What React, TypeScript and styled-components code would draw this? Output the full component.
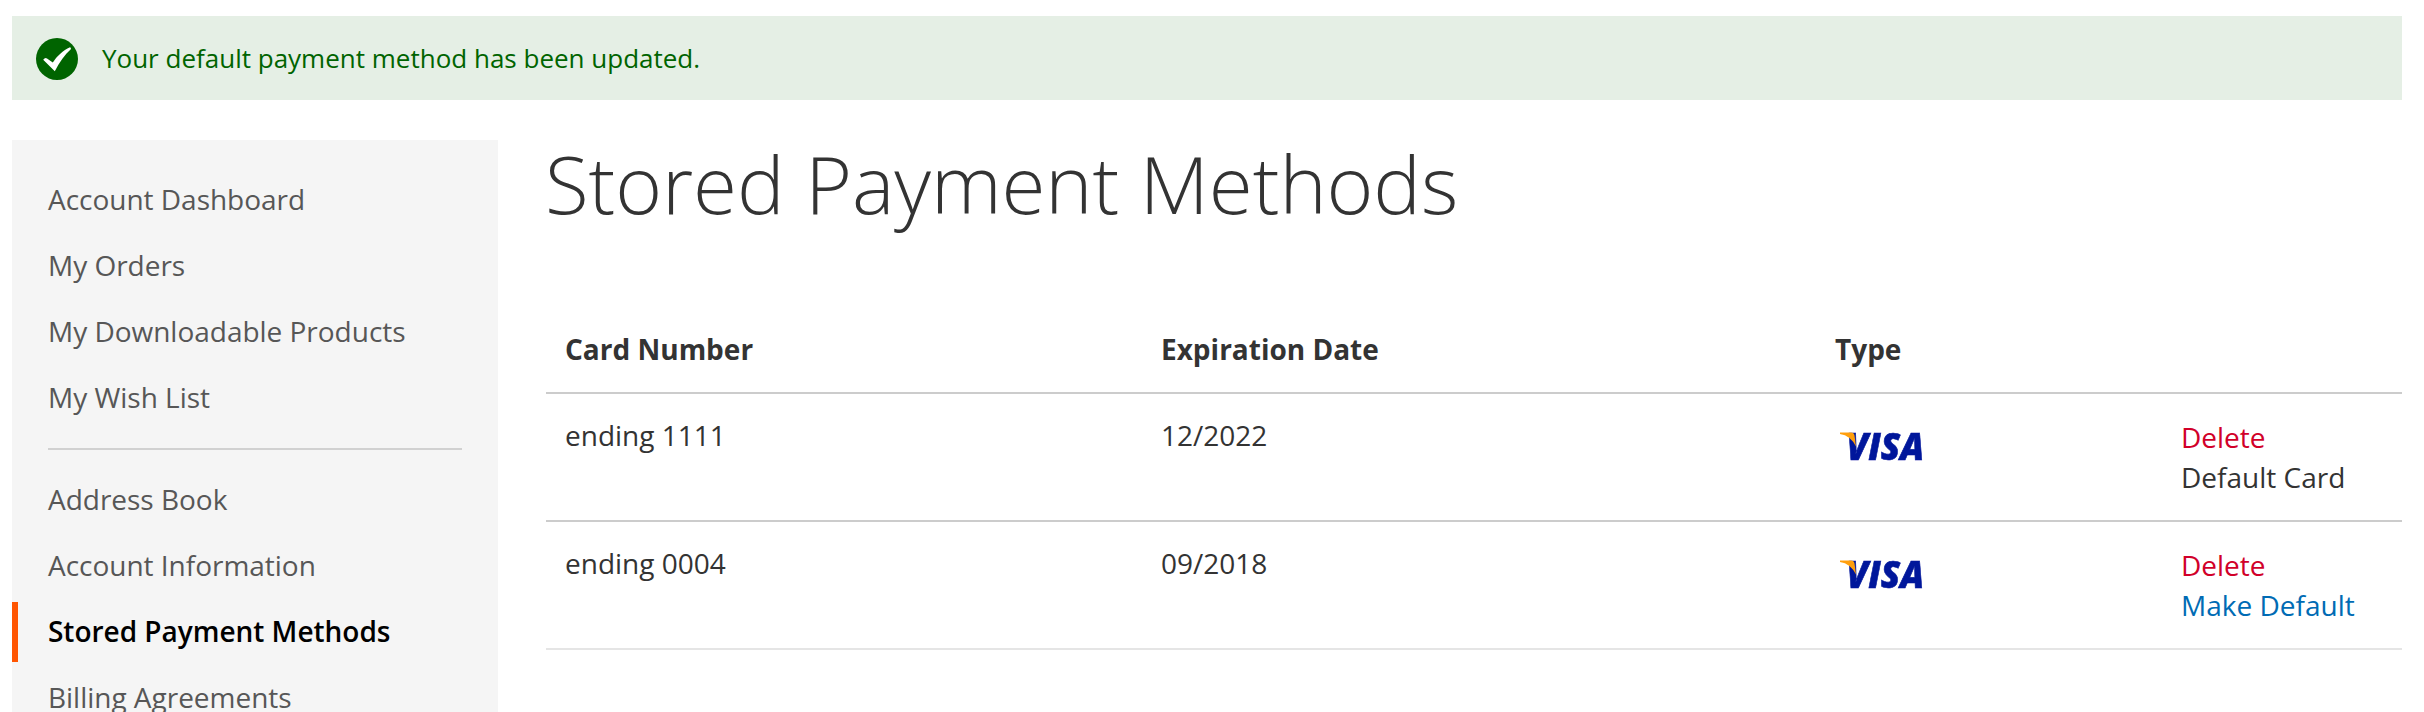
import React from "react";
import styled, { createGlobalStyle } from "styled-components";

const GlobalStyle = createGlobalStyle`
  * { box-sizing: border-box; }
  body {
    margin: 0;
    background: #fff;
    color: #333;
    font-family: "Open Sans", "Noto Sans", sans-serif;
    font-size: 28px;
    line-height: 40px;
  }
`;

const Page = styled.div`
  width: 100%;
  height: 712px;
  padding: 16px 22px 0 12px;
  overflow: hidden;
`;

const Message = styled.div`
  display: flex;
  align-items: center;
  height: 84px;
  padding: 2px 24px 0;
  gap: 24px;
  background: #e5efe5;
  color: #006400;
  font-size: 26px;
  line-height: 36px;
`;

const MessageText = styled.span`
  padding-bottom: 2px;
`;

const Columns = styled.div`
  display: flex;
  align-items: flex-start;
  gap: 48px;
  margin-top: 40px;
`;

const Sidebar = styled.nav`
  flex: 0 0 486px;
  padding: 30px 0;
  background: #f5f5f5;
`;

const NavList = styled.ul`
  display: flex;
  flex-direction: column;
  gap: 6px;
  margin: 0;
  padding: 0;
  list-style: none;
`;

const NavItem = styled.li<{ $current?: boolean }>`
  height: 60px;
  padding: 9px 30px 11px;
  border-left: 6px solid ${(p) => (p.$current ? "#ff5501" : "transparent")};
  color: ${(p) => (p.$current ? "#000" : "#575757")};
  font-weight: ${(p) => (p.$current ? 600 : 400)};
  letter-spacing: -0.02px;
  white-space: nowrap;
`;

const Divider = styled.hr`
  height: 2px;
  margin: 20px 36px;
  border: 0;
  background: #d1d1d1;
`;

const Main = styled.main`
  flex: 1;
  min-width: 0;
`;

const Title = styled.h1`
  margin: -1px 0 81px -1px;
  font-size: 80px;
  font-weight: 300;
  letter-spacing: -0.08px;
  line-height: 88px;
`;

const Row = styled.div<{ $line: string; $head?: boolean }>`
  display: grid;
  grid-template-columns: 596px 674px 346px 1fr;
  height: ${(p) => (p.$head ? "86px" : "128px")};
  padding: 21px 0 0 19px;
  border-bottom: 2px solid ${(p) => p.$line};
  font-weight: ${(p) => (p.$head ? 700 : 400)};
`;

const Actions = styled.div`
  display: flex;
  flex-direction: column;
  padding-top: 2px;
`;

const Action = styled.span<{ $color: string }>`
  color: ${(p) => p.$color};
`;

const SuccessIcon = () => (
  <svg width="42" height="42" viewBox="0 0 42 42">
    <circle cx="21" cy="21" r="21" fill="#006400" />
    <path
      d="M7.200 21.800 Q9 19.300 11 20.400 L16.800 24.600 C21 18 27 12.500 34 9.300 Q35.500 9.800 34.800 11.300 C28.500 17 23.500 24 18.800 33.300 Z"
      fill="#fff"
    />
  </svg>
);

const VisaLogo = () => (
  <svg width="96" height="62" viewBox="0 0 96 62">
    <defs>
      <filter id="soft" x="-10%" y="-10%" width="120%" height="120%">
        <feGaussianBlur stdDeviation="0.7" />
      </filter>
    </defs>
    <g filter="url(#soft)">
      <text
        x="11.500"
        y="44.500"
        fontFamily="Open Sans"
        fontSize="36.500"
        fontWeight="800"
        fontStyle="italic"
        fill="#00179b"
        stroke="#00179b"
        strokeWidth="0.6"
        textLength="77.500"
        lengthAdjust="spacingAndGlyphs"
      >
        VISA
      </text>
      <path d="M5 17.500 H16 Q19 17.500 19.500 20.500 L21 31.500 Q15.500 20.500 5 19 Z" fill="#ff9f0f" />
    </g>
  </svg>
);

const accountLinks = ["Account Dashboard", "My Orders", "My Downloadable Products", "My Wish List"];
const settingsLinks = ["Address Book", "Account Information", "Stored Payment Methods", "Billing Agreements"];

const cards = [
  { number: "ending 1111", expires: "12/2022", isDefault: true },
  { number: "ending 0004", expires: "09/2018", isDefault: false },
];

export default function App() {
  return (
    <Page>
      <GlobalStyle />
      <Message>
        <SuccessIcon />
        <MessageText>Your default payment method has been updated.</MessageText>
      </Message>
      <Columns>
        <Sidebar>
          <NavList>
            {accountLinks.map((label) => <NavItem key={label}>{label}</NavItem>)}
          </NavList>
          <Divider />
          <NavList>
            {settingsLinks.map((label) => (
              <NavItem key={label} $current={label === "Stored Payment Methods"}>{label}</NavItem>
            ))}
          </NavList>
        </Sidebar>
        <Main>
          <Title>Stored Payment Methods</Title>
          <Row $head $line="#ccc">
            <span>Card Number</span>
            <span>Expiration Date</span>
            <span>Type</span>
          </Row>
          {cards.map((card) => (
            <Row key={card.number} $line={card.isDefault ? "#ccc" : "#e5e5e5"}>
              <span>{card.number}</span>
              <span>{card.expires}</span>
              <VisaLogo />
              <Actions>
                <Action $color="#d10029">Delete</Action>
                {card.isDefault ? (
                  <Action $color="#333">Default Card</Action>
                ) : (
                  <Action $color="#006bb4">Make Default</Action>
                )}
              </Actions>
            </Row>
          ))}
        </Main>
      </Columns>
    </Page>
  );
}
